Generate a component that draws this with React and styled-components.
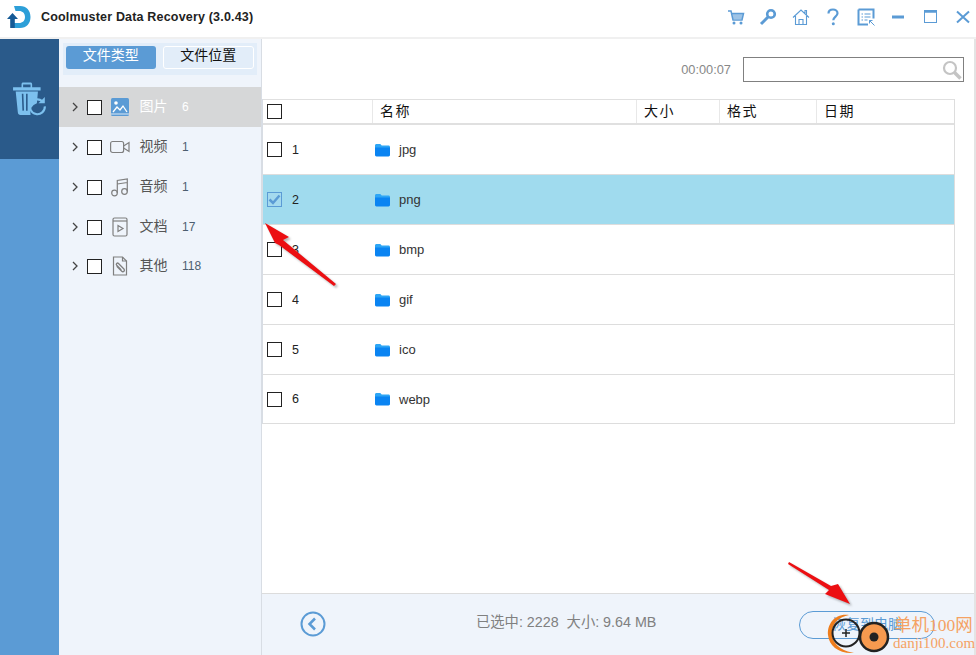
import styled, { createGlobalStyle } from 'styled-components'

const GlobalStyle = createGlobalStyle`
  html, body {
    margin: 0;
    padding: 0;
    background: white;
    font-family: "Liberation Sans", "Noto Sans CJK SC", sans-serif;
  }
  * { box-sizing: border-box; }
`

const Window = styled.div`
  position: relative;
  width: 976px;
  height: 655px;
  overflow: hidden;
  display: flex;
  flex-direction: column;
  background: white;
`

const TitleBar = styled.div`
  height: 39px;
  flex: none;
  display: flex;
  align-items: center;
  padding: 0 0 3px 7px;
  border-bottom: 2px solid #f0f0f0;
`

const Logo = styled.svg`
  width: 24px;
  height: 26px;
  margin-right: 10px;
`

const Title = styled.div`
  font-size: 12.5px;
  font-weight: bold;
  color: #222;
  letter-spacing: 0.18px;
`

const WindowIcons = styled.div`
  margin-left: auto;
  margin-right: 4px;
  display: flex;
  align-items: center;
  gap: 14.5px;
`

const TopIcon = styled.svg`
  width: 18px;
  height: 18px;
  display: block;
  color: #5b9bd5;
`

const Body = styled.div`
  flex: 1;
  display: flex;
  min-height: 0;
`

const Rail = styled.div`
  width: 59px;
  flex: none;
  background: #5b9bd5;
`

const RailTop = styled.div`
  height: 120px;
  background: #2a5a8a;
  display: flex;
  align-items: center;
  justify-content: center;
`

const Sidebar = styled.div`
  width: 203px;
  flex: none;
  background: #eff4fb;
  border-right: 1px solid #d8dde4;
  padding-top: 4px;
`

const Tabs = styled.div`
  margin: 0 4px 12px 4px;
  height: 32px;
  padding: 3px;
  background: #e2edf9;
  display: flex;
  gap: 7px;
  align-items: flex-start;
`

const Tab = styled.div`
  height: 23px;
  width: ${p => (p.$active ? '90px' : '92px')};
  border-radius: 3px;
  display: flex;
  align-items: center;
  justify-content: center;
  padding-bottom: 7px;
  font-size: 14px;
  font-family: "Noto Sans CJK SC", sans-serif;
  color: ${p => (p.$active ? '#fff' : '#111')};
  background: ${p => (p.$active ? '#5b9bd5' : 'transparent')};
  border: ${p => (p.$active ? 'none' : '1px solid #fff')};
`

const TypeRow = styled.div`
  height: 40px;
  margin-bottom: ${p => p.$tight ? '-1px' : '0'};
  display: flex;
  align-items: center;
  padding-left: 13px;
  background: ${p => (p.$active ? '#d6d7d8' : 'transparent')};
`

const Chevron = styled.svg`
  width: 6px;
  height: 10px;
  margin-right: 9px;
  color: #444;
`

const Check = styled.div`
  width: 15px;
  height: 15px;
  flex: none;
  border: 1px solid ${p => (p.$checked ? '#5b9bd5' : '#222')};
  background: ${p => (p.$checked ? '#a4d9ee' : 'white')};
  display: flex;
  align-items: center;
  justify-content: center;
`

const TypeIcon = styled.svg`
  width: 20px;
  height: 20px;
  margin-left: 8px;
  margin-right: 9.5px;
  flex: none;
  color: #7f7f7f;
`

const TypeName = styled.div`
  width: 42.5px;
  padding-bottom: 4px;
  font-size: 14px;
  font-family: "Noto Sans CJK SC", sans-serif;
  color: ${p => (p.$active ? '#fff' : '#555')};
`

const TypeCount = styled.div`
  font-size: 12px;
  color: ${p => (p.$active ? '#fff' : '#4d5e70')};
`

const Main = styled.div`
  flex: 1;
  display: flex;
  flex-direction: column;
  min-width: 0;
  border-right: 2px solid #e4e4e4;
`

const Toolbar = styled.div`
  height: 60px;
  flex: none;
  display: flex;
  align-items: center;
  justify-content: flex-end;
  padding: 1px 10px 0 0;
`

const Timer = styled.div`
  font-size: 12.8px;
  color: #888;
  margin-right: 12px;
`

const Search = styled.div`
  width: 221px;
  height: 25px;
  border: 1px solid #808080;
  display: flex;
  align-items: center;
  justify-content: flex-end;
`

const Table = styled.div`
  width: 693px;
  flex: none;
  border-left: 1px solid #d8dde4;
  border-right: 1px solid #ddd;
  border-bottom: 1px solid #ddd;
`

const HeaderRow = styled.div`
  height: 26px;
  display: grid;
  grid-template-columns: 110px 264px 83px 97px 1fr;
  border-top: 1px solid #e0e0e0;
  border-bottom: 2px solid #e0e0e0;
`

const HeaderCell = styled.div`
  display: flex;
  align-items: center;
  padding-left: ${p => (p.$first ? '4px' : '7px')};
  padding-bottom: ${p => (p.$first ? '0' : '3px')};
  font-size: 14px;
  font-family: "Noto Sans CJK SC", sans-serif;
  color: #111;
  letter-spacing: 1.5px;
  border-right: ${p => (p.$last ? 'none' : '1px solid #e8e8e8')};
`

const Row = styled.div`
  height: ${p => (p.$last ? '48px' : '50px')};
  display: flex;
  align-items: center;
  padding-left: 4px;
  background: ${p => (p.$selected ? '#a0dbee' : 'white')};
  border-bottom: ${p => (p.$last ? 'none' : '1px solid #ddd')};
`

const RowNumber = styled.div`
  width: 93px;
  padding-left: 10px;
  font-size: 12.5px;
  color: #222;
`

const FolderIcon = styled.svg`
  width: 15px;
  height: 14px;
  margin-right: 9px;
`

const RowName = styled.div`
  font-size: 13px;
  color: #333;
`

const Spacer = styled.div`
  flex: 1;
`

const Footer = styled.div`
  height: 62px;
  flex: none;
  background: #eff4fb;
  border-top: 1px solid #dcdcdc;
  display: flex;
  align-items: center;
  padding: 0 39px 0 38px;
`

const BackButton = styled.svg`
  width: 26px;
  height: 26px;
  margin-top: -2px;
  color: #5b9bd5;
`

const Summary = styled.div`
  margin-left: 150px;
  margin-top: -9px;
  font-size: 14.3px;
  color: #808080;
  white-space: pre;
`

const RecoverButton = styled.div`
  margin-left: auto;
  width: 136px;
  height: 28px;
  border: 1px solid #5b9bd5;
  border-radius: 14px;
  display: flex;
  align-items: center;
  justify-content: center;
  padding-bottom: 3px;
  font-size: 14px;
  color: #5b9bd5;
  font-family: "Noto Sans CJK SC", sans-serif;
`

/* annotation arrows pasted on top of the screenshot */
const ArrowLayer = styled.svg`
  position: absolute;
  left: ${p => p.$x}px;
  top: ${p => p.$y}px;
  overflow: visible;
`

const Watermark = styled.div`
  position: absolute;
  left: 827px;
  top: 610px;
  width: 149px;
  height: 45px;
`

const WatermarkLogo = styled.svg`
  position: absolute;
  left: 0;
  top: 0;
  width: 70px;
  height: 45px;
`

const WatermarkTitle = styled.div`
  position: absolute;
  left: 67px;
  top: 6px;
  font-size: 17.5px;
  line-height: 18px;
  font-family: "Liberation Serif", "Noto Sans CJK SC", serif;
  color: #f5a263;
  white-space: nowrap;
`

const WatermarkUrl = styled.div`
  position: absolute;
  left: 66px;
  top: 26px;
  font-size: 15px;
  line-height: 15px;
  font-family: "Liberation Serif", serif;
  color: #f5a263;
  white-space: nowrap;
`

const types = [
  { name: '图片', count: 6, icon: 'image', active: true },
  { name: '视频', count: 1, icon: 'video' },
  { name: '音频', count: 1, icon: 'music' },
  { name: '文档', count: 17, icon: 'doc', tight: true },
  { name: '其他', count: 118, icon: 'other' },
]

const folders = ['jpg', 'png', 'bmp', 'gif', 'ico', 'webp']

const TypeGlyph = ({ icon }) => {
  if (icon === 'image') {
    return (
      <TypeIcon viewBox="0 0 20 20">
        <rect x="1" y="1" width="18" height="18" rx="1.5" fill="#5b9bd5" />
        <circle cx="6" cy="6" r="1.8" fill="#fff" />
        <path d="M3 15l4-5 3 3 3-4 4 6" fill="none" stroke="#fff" strokeWidth="1.3" />
        <path d="M1 17h18" stroke="#fff" strokeWidth="0.8" />
      </TypeIcon>
    )
  }
  if (icon === 'video') {
    return (
      <TypeIcon viewBox="0 0 20 20" fill="none" stroke="currentColor" strokeWidth="1.2">
        <rect x="0.6" y="4.5" width="13" height="11" rx="2" />
        <path d="M13.6 9l5.4-3.5v9L13.6 11" />
      </TypeIcon>
    )
  }
  if (icon === 'music') {
    return (
      <TypeIcon viewBox="0 0 20 20" fill="none" stroke="currentColor" strokeWidth="1.2">
        <circle cx="4.5" cy="16" r="2.8" />
        <circle cx="14.5" cy="14.5" r="2.8" />
        <path d="M7.3 16V3.5l10-1.5v12.5M7.3 7l10-1.5" />
      </TypeIcon>
    )
  }
  if (icon === 'doc') {
    return (
      <TypeIcon viewBox="0 0 20 20" fill="none" stroke="currentColor" strokeWidth="1.2">
        <rect x="3" y="1" width="14" height="18" rx="1.5" />
        <path d="M3 4h14" />
        <path d="M8 8.5l5 3-5 3z" />
      </TypeIcon>
    )
  }
  return (
    <TypeIcon viewBox="0 0 20 20" fill="none" stroke="currentColor" strokeWidth="1.2">
      <path d="M3.5 1h9l4 4v14h-13z" />
      <path d="M12.5 1v4h4" />
      <path d="M6.500 10l5 5c1.800 1.800 4-.4 2.200-2.200L8.500 7.500c-1.200-1.200-3 .6-1.800 1.800l4.600 4.600" strokeWidth="1.300" />
    </TypeIcon>
  )
}

const Folder = () => (
  <FolderIcon viewBox="0 0 15 14">
    <path d="M0 2.5C0 1.600.6 1 1.500 1h3.800l1.400 1.600h6.800c.9 0 1.500.6 1.500 1.500V5H0z" fill="#2ea6f5" />
    <path d="M0 4.500h15v7.500c0 .9-.6 1.400-1.500 1.400h-12C.6 13.400 0 12.900 0 12z" fill="#0a84f2" />
  </FolderIcon>
)

const RedArrow = ({ x, y, width, height, shape, id }) => (
  <ArrowLayer $x={x} $y={y} width={width} height={height} viewBox={`0 0 ${width} ${height}`}>
    <defs>
      <filter id={id} x="-20%" y="-20%" width="150%" height="150%">
        <feGaussianBlur stdDeviation="1.2" />
      </filter>
    </defs>
    <path d={shape} fill="#333" opacity="0.35" transform="translate(2 2)" filter={`url(#${id})`} />
    <path d={shape} fill="#ec0f12" />
  </ArrowLayer>
)

const App = () => (
  <Window>
    <GlobalStyle />
    <TitleBar>
      <Logo viewBox="0 0 24 26">
        <path d="M7 2h6c6.500 0 10.500 4.500 10.500 11S19.500 24 13 24H6l-1.500-5H12c3.600 0 6-2.300 6-6s-2.400-6-6-6H8.500z" fill="#2d9fd8" />
        <path d="M5.500 9L0 15h3.200v9h4.600v-9H11z" fill="#155a96" />
      </Logo>
      <Title>Coolmuster Data Recovery (3.0.43)</Title>
      <WindowIcons>
        <TopIcon viewBox="0 0 18 18" fill="none" stroke="currentColor">
          <path d="M1 3h3l2 9h9l1.500-6.500H5" strokeWidth="1.500" />
          <path d="M5 6h11l-1 5H6z" fill="currentColor" opacity="0.6" stroke="none" />
          <circle cx="7" cy="15" r="1.500" fill="currentColor" stroke="none" />
          <circle cx="14" cy="15" r="1.500" fill="currentColor" stroke="none" />
        </TopIcon>
        <TopIcon viewBox="0 0 18 18" fill="none" stroke="currentColor">
          <circle cx="12" cy="6" r="3.800" strokeWidth="2.600" />
          <path d="M9 9l-7 7" strokeWidth="3" />
        </TopIcon>
        <TopIcon viewBox="0 0 18 18" fill="none" stroke="currentColor" strokeWidth="1.100">
          <path d="M1 9.500L9 2l8 7.500M3.500 8v8.500h11V8M7 16.500v-5h4v5M13 5V2.500h1.500v4" />
        </TopIcon>
        <TopIcon viewBox="0 0 18 18" fill="none" stroke="currentColor">
          <path d="M4.500 5.500C4.500 3 6.500 1.500 9 1.500s4.500 1.500 4.500 3.800c0 3.200-4.200 3.400-4.200 7" strokeWidth="2.200" />
          <circle cx="9.300" cy="15.700" r="1.500" fill="currentColor" stroke="none" />
        </TopIcon>
        <TopIcon viewBox="0 0 18 18" fill="none" stroke="currentColor">
          <path d="M1.500 1.500h15v9M11 16.500H1.500V1.500" strokeWidth="2" />
          <path d="M4.500 6h1.500M7.500 6h6M4.500 9h1.500M7.500 9h6M4.500 12h1.500M7.500 12h3" strokeWidth="1.200" />
          <path d="M12.500 12.500l5 5M12.500 12.500h3M12.500 12.500v3" strokeWidth="1" />
        </TopIcon>
        <TopIcon viewBox="0 0 18 18">
          <rect x="3" y="7.500" width="12" height="3" fill="currentColor" />
        </TopIcon>
        <TopIcon viewBox="0 0 18 18" fill="none" stroke="currentColor">
          <rect x="2.500" y="2.500" width="12" height="12" strokeWidth="1" />
          <path d="M2.500 3.500h12" strokeWidth="2.500" />
        </TopIcon>
        <TopIcon viewBox="0 0 18 18" fill="none" stroke="currentColor" strokeWidth="2">
          <path d="M3 3.500l12 11M15 3.500l-12 11" />
        </TopIcon>
      </WindowIcons>
    </TitleBar>
    <Body>
      <Rail>
        <RailTop>
          <svg width="36" height="36" viewBox="0 0 34 34">
            <path d="M1 6h26v3H1zM9 6V3c0-1 .7-1.500 1.500-1.500h7c.8 0 1.500.5 1.500 1.500v3h-1.500V3.200h-7V6z" fill="#7cc0ee" />
            <path d="M3.500 10h21l-1 11a9 9 0 0 0-6 11H8c-1.500 0-2.300-.8-2.500-2.500z" fill="#7cc0ee" />
            <path d="M10 12l.6 16M14 12v16" stroke="#2a5a8a" strokeWidth="1.500" />
            <path d="M31 24a7 7 0 1 1-2.500-5" fill="none" stroke="#7cc0ee" strokeWidth="2" />
            <path d="M31 15v6h-6z" fill="#7cc0ee" />
          </svg>
        </RailTop>
      </Rail>
      <Sidebar>
        <Tabs>
          <Tab $active>文件类型</Tab>
          <Tab>文件位置</Tab>
        </Tabs>
        {types.map(t => (
          <TypeRow key={t.name} $active={t.active} $tight={t.tight}>
            <Chevron viewBox="0 0 6 10" fill="none" stroke="currentColor" strokeWidth="1.300">
              <path d="M1 1l4 4-4 4" />
            </Chevron>
            <Check />
            <TypeGlyph icon={t.icon} />
            <TypeName $active={t.active}>{t.name}</TypeName>
            <TypeCount $active={t.active}>{t.count}</TypeCount>
          </TypeRow>
        ))}
      </Sidebar>
      <Main>
        <Toolbar>
          <Timer>00:00:07</Timer>
          <Search>
            <svg width="22" height="22" viewBox="0 0 22 22" fill="none" stroke="#c4c4c4">
              <circle cx="9" cy="9" r="6" strokeWidth="2.200" />
              <path d="M13.500 13.500l6 6" strokeWidth="3.500" />
            </svg>
          </Search>
        </Toolbar>
        <Table>
          <HeaderRow>
            <HeaderCell $first><Check /></HeaderCell>
            <HeaderCell>名称</HeaderCell>
            <HeaderCell>大小</HeaderCell>
            <HeaderCell>格式</HeaderCell>
            <HeaderCell $last>日期</HeaderCell>
          </HeaderRow>
          {folders.map((name, i) => (
            <Row key={name} $selected={i === 1} $last={i === folders.length - 1}>
              <Check $checked={i === 1}>
                {i === 1 && (
                  <svg width="13" height="13" viewBox="0 0 13 13" fill="none" stroke="#5b9bd5" strokeWidth="2.500">
                    <path d="M1.500 6.500l3.500 3.500 6.500-7.500" />
                  </svg>
                )}
              </Check>
              <RowNumber>{i + 1}</RowNumber>
              <Folder />
              <RowName>{name}</RowName>
            </Row>
          ))}
        </Table>
        <Spacer />
        <Footer>
          <BackButton viewBox="0 0 26 26" fill="none" stroke="currentColor">
            <circle cx="13" cy="13" r="11.500" strokeWidth="2" />
            <path d="M15 7.500L9.500 13l5.500 5.500" strokeWidth="2.500" />
          </BackButton>
          <Summary>已选中: 2228  大小: 9.64 MB</Summary>
          <RecoverButton>恢复到电脑</RecoverButton>
        </Footer>
      </Main>
    </Body>
    <RedArrow
      id="arrow-a"
      x={262}
      y={222}
      width={80}
      height={70}
      shape="M3 1L27 15L21 18L74 62L72 64L17 23L13 21z"
    />
    <RedArrow
      id="arrow-b"
      x={785}
      y={558}
      width={70}
      height={50}
      shape="M4 4L46 28L53 26L65 46L40 36L44 32L3 6z"
    />
    <Watermark>
      <WatermarkLogo viewBox="0 0 70 45">
        <path d="M22 5C8 3 0 14 1 25C2 36 12 44 27 43C16 41 5 35 5 23C5 13 12 7 22 5z" fill="#ee7d1c" />
        <circle cx="19" cy="23" r="13.500" fill="none" stroke="#222" strokeWidth="2" />
        <path d="M15 23h8M19 19v8" stroke="#222" strokeWidth="1.500" />
        <circle cx="47" cy="27" r="14" fill="#f79a4f" stroke="#222" strokeWidth="2.500" />
        <circle cx="47" cy="27" r="4.500" fill="#222" />
      </WatermarkLogo>
      <WatermarkTitle>单机100网</WatermarkTitle>
      <WatermarkUrl>danji100.com</WatermarkUrl>
    </Watermark>
  </Window>
)

export default App
